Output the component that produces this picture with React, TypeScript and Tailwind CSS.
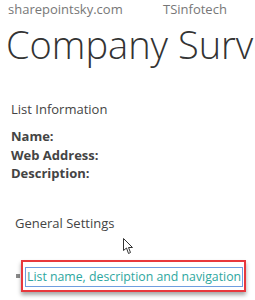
export default function App() {
  return (
    <div
      className="relative w-[255px] h-[300px] overflow-hidden bg-white text-[#444]"
      style={{ fontFamily: '"Open Sans", "Noto Sans", sans-serif' }}
    >
      <div className="flex pl-[8px] pt-[1px] text-[13px] leading-[16px] text-[#777]">
        <span className="w-[155px]">sharepointsky.com</span>
        <span>TSinfotech</span>
      </div>

      <h1 className="pl-[6px] mt-[5px] text-[38px] leading-[44px] font-light whitespace-nowrap text-[#333]">
        Company Survey
      </h1>

      <div className="pl-[11px] mt-[34px] text-[13px] leading-[18px]">List Information</div>

      <div className="pl-[11px] mt-[9px] text-[13px] leading-[18.5px] font-bold">
        <div>Name:</div>
        <div>Web Address:</div>
        <div>Description:</div>
      </div>

      <div className="pl-[15px] mt-[31px] text-[13px] leading-[18px]">General Settings</div>

      <div className="flex items-center mt-[28px] pl-[16px]">
        <span className="w-[4px] h-[4px] bg-[#8a8a8a] mr-[1px]" />
        <div className="border-2 border-[#e8383d] shadow-[0_3px_4px_rgba(0,0,0,0.35)] pl-[2px] pr-[1px] pt-[5px] pb-[3px]">
          <a className="block border border-[#6f9de0] px-[1px] py-[1px] text-[12.3px] leading-[16px] text-[#2ea7a0] whitespace-nowrap">
            List name, description and navigation
          </a>
        </div>
      </div>

      <svg
        className="absolute left-[123px] top-[238px]"
        width="11"
        height="17"
        viewBox="0 0 11 17"
      >
        <path
          d="M0.5 0.5 L0.5 12.5 L3.5 10 L5.5 15.5 L7.5 14.5 L5.5 9.5 L9.5 9.5 Z"
          fill="white"
          stroke="#333"
          strokeWidth="1"
          strokeLinejoin="round"
        />
      </svg>
    </div>
  )
}
